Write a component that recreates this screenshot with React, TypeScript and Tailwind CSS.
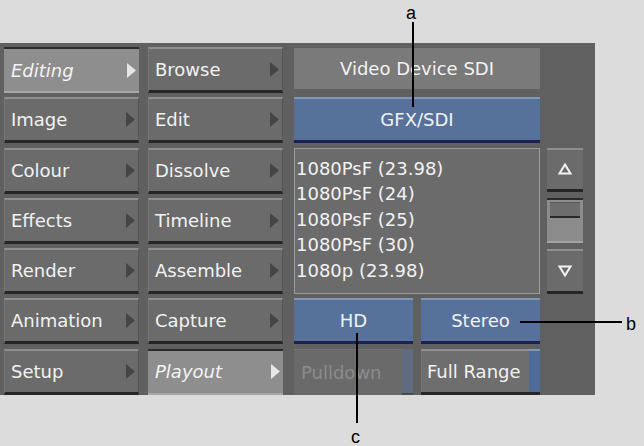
import React from "react";

const FONT = { fontFamily: '"DejaVu Sans", "Liberation Sans", sans-serif' };

function Tri({ light }: { light?: boolean }) {
  return (
    <svg width="9" height="15" viewBox="0 0 9 15" className="shrink-0">
      <path d="M0 0 L9 7.5 L0 15 Z" fill={light ? "#e6e6e6" : "#454545"} />
    </svg>
  );
}

function MenuBtn({ label, selected }: { label: string; selected?: boolean }) {
  if (selected) {
    return (
      <div className="flex h-full items-center justify-between border-t-2 border-b-2 border-t-[#2b2b2b] border-b-[#a6a6a6] bg-[#8e8e8e] pl-[7px] pr-[3px]">
        <span className="text-[18px] italic text-[#f4f4f4]">{label}</span>
        <Tri light />
      </div>
    );
  }
  return (
    <div className="flex h-full items-center justify-between border-t-2 border-b-[3px] border-l border-r border-t-[#8f8f8f] border-b-[#262626] border-l-[#767676] border-r-[#565656] bg-[#6b6b6b] pl-[6px] pr-[3px]">
      <span className="text-[18px] text-[#f2f2f2]">{label}</span>
      <Tri />
    </div>
  );
}

function BlueBtn({ label }: { label: string }) {
  return (
    <div className="flex h-full items-center justify-center border-t-2 border-b-[3px] border-t-[#7f97b8] border-b-[#1d2052] bg-[#56719a] text-[18px] text-[#f2f2f2]">
      {label}
    </div>
  );
}

function TriOutline({ up }: { up?: boolean }) {
  return (
    <svg width="14" height="12" viewBox="0 0 14 12">
      {up ? (
        <path d="M7 1.5 L12.5 10.5 L1.5 10.5 Z" fill="none" stroke="#f2f2f2" strokeWidth="2" strokeLinejoin="miter" />
      ) : (
        <path d="M1.5 1.5 L12.5 1.5 L7 10.5 Z" fill="none" stroke="#f2f2f2" strokeWidth="2" strokeLinejoin="miter" />
      )}
    </svg>
  );
}

export default function App() {
  const left = ["Editing", "Image", "Colour", "Effects", "Render", "Animation", "Setup"];
  const mid = ["Browse", "Edit", "Dissolve", "Timeline", "Assemble", "Capture", "Playout"];
  const list = ["1080PsF (23.98)", "1080PsF (24)", "1080PsF (25)", "1080PsF (30)", "1080p (23.98)"];
  return (
    <div className="relative h-[446px] w-[644px] overflow-hidden bg-[#dcdcdc]" style={FONT}>
      <div className="mt-[43px] h-[352px] w-[595px] bg-[#606060] pl-[4px] pt-[4px]">
        <div className="grid grid-cols-[135px_144px_257px_43px] grid-rows-[repeat(7,46px)] gap-y-[4.3px]">
          {left.map((l, i) => (
            <div key={l} className="col-start-1" style={{ gridRow: i + 1 }}>
              <MenuBtn label={l} selected={i === 0} />
            </div>
          ))}
          {mid.map((l, i) => (
            <div key={l} className="col-start-2 ml-[9px]" style={{ gridRow: i + 1 }}>
              <MenuBtn label={l} selected={i === 6} />
            </div>
          ))}
          {/* right area */}
          <div className="col-start-3 row-start-1 ml-[11px] mt-[1px] mb-[4px] flex items-center justify-center bg-[#7a7a7a] text-[18px] text-[#f2f2f2]">
            Video Device SDI
          </div>
          <div className="col-start-3 row-start-2 ml-[11px]">
            <BlueBtn label="GFX/SDI" />
          </div>
          <div className="col-start-3 row-start-3 row-span-3 ml-[11px] border border-[#9c9c9c] bg-[#6b6b6b] pl-[1px] pt-[7px] text-[18px] leading-[25.5px] text-[#f2f2f2]">
            {list.map((t) => (
              <div key={t}>{t}</div>
            ))}
          </div>
          <div className="col-start-3 row-start-6 ml-[11px] flex gap-[8px]">
            <div className="w-[119px]">
              <BlueBtn label="HD" />
            </div>
            <div className="w-[119px]">
              <BlueBtn label="Stereo" />
            </div>
          </div>
          <div className="col-start-3 row-start-7 ml-[11px] flex gap-[8px]">
            <div className="flex w-[119px]">
              <div className="flex flex-1 items-center border-t border-t-[#747474] bg-[#6a6a6a] pl-[7px] text-[18px] text-[#8c8c8c]">
                Pulldown
              </div>
              <div className="w-[11px] border-b-2 border-b-[#4a4a4a] bg-[#5e6b80]" />
            </div>
            <div className="flex w-[119px] border-b-[3px] border-b-[#262626]">
              <div className="flex flex-1 items-center whitespace-nowrap border-t-2 border-l border-t-[#909090] border-l-[#787878] bg-[#6e6e6e] pl-[5px] text-[18px] text-[#f2f2f2]">
                Full Range
              </div>
              <div className="w-[11px] border-t-2 border-t-[#7f97b8] bg-[#4f6b97]" />
            </div>
          </div>
          {/* scroll column */}
          <div className="col-start-4 row-start-3 row-span-3 ml-[7px] flex flex-col justify-between">
            <div className="flex h-[44px] items-center justify-center border-t-2 border-b-[3px] border-t-[#8f8f8f] border-b-[#262626] bg-[#6b6b6b]">
              <TriOutline up />
            </div>
            <div className="h-[45px] border-t-2 border-b-2 border-t-[#2b2b2b] border-b-[#a4a4a4] bg-[#8c8c8c] px-[3px] pt-[2px]">
              <div className="h-[16px] border-t border-b-2 border-t-[#5a5a5a] border-b-[#2a2a2a] bg-[#6d6d6d]" />
            </div>
            <div className="flex h-[45px] items-center justify-center border-t-2 border-b-[3px] border-t-[#8f8f8f] border-b-[#262626] bg-[#6b6b6b]">
              <TriOutline />
            </div>
          </div>
        </div>
      </div>

      {/* annotations */}
      <div
        className="absolute left-[406px] top-[0px] text-[18px] text-black"
        style={{ fontFamily: '"Liberation Sans", Arial, sans-serif' }}
      >
        a
      </div>
      <div className="absolute left-[412px] top-[22px] h-[85px] w-[2px] bg-black" />
      <div className="absolute left-[520px] top-[321px] h-[2px] w-[102px] bg-black" />
      <div
        className="absolute left-[626px] top-[311px] text-[18px] text-black"
        style={{ fontFamily: '"Liberation Sans", Arial, sans-serif' }}
      >
        b
      </div>
      <div className="absolute left-[356px] top-[333px] h-[90px] w-[2px] bg-black" />
      <div
        className="absolute left-[351px] top-[424px] text-[18px] text-black"
        style={{ fontFamily: '"Liberation Sans", Arial, sans-serif' }}
      >
        c
      </div>
    </div>
  );
}
